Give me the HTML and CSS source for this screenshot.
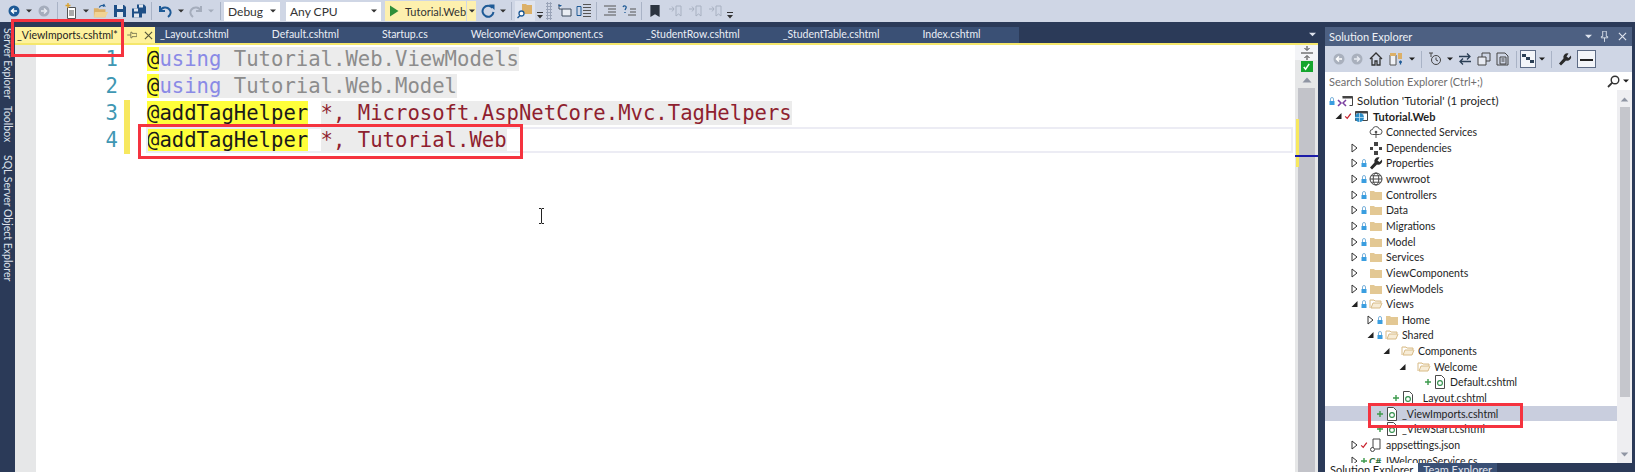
FILE: index.html
```html
<!DOCTYPE html>
<html lang="en">
<head>
<meta charset="utf-8">
<title>Visual Studio</title>
<link rel="stylesheet" href="styles.css">
</head>
<body>
<svg class="sprite" aria-hidden="true">
  <symbol id="folder" viewBox="0 0 14 12"><path d="M1 2h4l1 1h7v8H1z" fill="#e3c894"/></symbol>
  <symbol id="folder-open" viewBox="0 0 14 12"><path d="M1 2h4l1 1h6v2H4L2 10h9l2-5" fill="#f7ecd6" stroke="#d8bb86"/><path d="M1 2v8" stroke="#d8bb86"/></symbol>
  <symbol id="lock" viewBox="0 0 8 10"><path d="M2.500 5V3a1.500 1.500 0 0 1 3 0v2" fill="none" stroke="#7db4dc"/><rect x="1.500" y="5" width="5" height="4" fill="#3a9ee0"/></symbol>
  <symbol id="check" viewBox="0 0 10 10"><path d="M1.500 5.500 4 8l4.500-6" fill="none" stroke="#c8202c" stroke-width="1.600"/></symbol>
  <symbol id="plus" viewBox="0 0 8 8"><path d="M4 1v6M1 4h6" stroke="#3c9a4c" stroke-width="1.400"/></symbol>
  <symbol id="razor" viewBox="0 0 14 14"><path d="M2.500 .5h6l3 3v10h-9z" fill="#fff" stroke="#4a4a4a"/><circle cx="7" cy="8" r="2.400" fill="none" stroke="#2f8f4a" stroke-width="1.100"/></symbol>
  <symbol id="wrench" viewBox="0 0 14 14"><path d="M13 3.500 10.500 6 8.500 4.500 10.500 1.500A4 4 0 0 0 5.500 6.500L1 11.500 3 13.500 8 8.500A4 4 0 0 0 13 3.500z" fill="#2a2a2a"/></symbol>
  <symbol id="globe" viewBox="0 0 14 14"><g fill="none" stroke="#444"><circle cx="7" cy="7" r="6"/><ellipse cx="7" cy="7" rx="2.800" ry="6"/><path d="M1 7h12M2 3.800h10M2 10.200h10"/></g></symbol>
  <symbol id="cloud" viewBox="0 0 14 14"><path d="M3.500 9.500a2.500 2.500 0 0 1 0-5 3.500 3.500 0 0 1 6.800-.5 2.700 2.700 0 0 1 0 5.500z" fill="#fff" stroke="#555"/><path d="M7 6v7" stroke="#555"/><circle cx="7" cy="7" r="1.300" fill="#555"/></symbol>
  <symbol id="deps" viewBox="0 0 14 14"><g fill="#444"><rect x="5" y="1" width="4" height="4"/><rect x="1" y="6" width="3" height="3"/><rect x="10" y="6" width="3" height="3"/><rect x="5" y="10" width="4" height="4"/></g></symbol>
  <symbol id="solution" viewBox="0 0 16 14"><path d="M5.500 2.500h10v9h-3" fill="none" stroke="#444"/><path d="M5.500 3.500h10" stroke="#444" stroke-width="2"/><path d="M1 6l3 3-3 3M9 6 6 9l3 3" fill="none" stroke="#7a3fa0" stroke-width="1.500"/></symbol>
  <symbol id="webproj" viewBox="0 0 16 14"><path d="M2.500 2.500h12v9h-12z" fill="#fff" stroke="#444"/><path d="M2.500 3.500h12" stroke="#444" stroke-width="2"/><circle cx="6.500" cy="8.500" r="4.500" fill="#2c8dc8"/><path d="M2 8.500h9M6.500 4v9" stroke="#bfe0f2" stroke-width=".8"/></symbol>
  <symbol id="json" viewBox="0 0 14 14"><path d="M4 1h7v10" fill="none" stroke="#444"/><path d="M4 1v9" stroke="#444"/><circle cx="3.500" cy="11.500" r="2" fill="none" stroke="#444"/><path d="M11 11H6" stroke="#444"/></symbol>
  <symbol id="back" viewBox="0 0 12 12"><circle cx="6" cy="6" r="5.500" fill="currentColor"/><path d="M9 6H4M6 3.500 3.500 6 6 8.500" fill="none" stroke="#fff" stroke-width="1.500"/></symbol>
  <symbol id="fwd" viewBox="0 0 12 12"><circle cx="6" cy="6" r="5.500" fill="currentColor"/><path d="M3 6h5M6 3.500 8.500 6 6 8.500" fill="none" stroke="#e8ebf2" stroke-width="1.500"/></symbol>
  <symbol id="dd" viewBox="0 0 6 4"><path d="M0 .5h6L3 3.500z" fill="currentColor"/></symbol>
  <symbol id="over" viewBox="0 0 6 7"><path d="M0 0h6v1H0zM0 3h6L3 6.500z" fill="#333"/></symbol>
  <symbol id="newproj" viewBox="0 0 16 16"><path d="M4.500 4.500h8v11h-8z" fill="#fff" stroke="#555"/><path d="M6 8h5M6 10h5M6 12h5" stroke="#555"/><path d="M5 0v5M2.500 2.500h5" stroke="#d9a22f" stroke-width="1.400"/></symbol>
  <symbol id="open" viewBox="0 0 18 16"><path d="M1 5h5l1 1h7v9H1z" fill="#dcb067"/><path d="M2 9h15l-3 6H1z" fill="#f0d394"/><path d="M7 4c1-2 4-3 6-2l-1-2m1 2-2 1" fill="none" stroke="#1e5a96" stroke-width="1.300"/></symbol>
  <symbol id="save" viewBox="0 0 14 14"><path d="M1 1h10l2 2v10H1z" fill="#1e4f86"/><rect x="4" y="1" width="6" height="4" fill="#dfe5ee"/><rect x="4" y="8" width="6" height="5" fill="#dfe5ee"/></symbol>
  <symbol id="saveall" viewBox="0 0 16 15"><path d="M6 1h7l2 2v7H6z" fill="#1e4f86"/><rect x="8" y="1" width="4" height="3" fill="#dfe5ee"/><path d="M1 5h8l2 2v7H1z" fill="#1e4f86"/><rect x="3" y="5" width="4" height="3" fill="#dfe5ee"/><rect x="3" y="10" width="5" height="4" fill="#dfe5ee"/></symbol>
  <symbol id="undo" viewBox="0 0 14 14"><path d="M2 2v5h5M2.500 6.500C4 3 9 2.500 11.500 5.500c2 2.500 1 5.500-1.500 7.500" fill="none" stroke="currentColor" stroke-width="2"/></symbol>
  <symbol id="redo" viewBox="0 0 14 14"><path d="M12 2v5H7M11.500 6.500C10 3 5 2.500 2.500 5.500c-2 2.500-1 5.500 1.500 7.500" fill="none" stroke="currentColor" stroke-width="2"/></symbol>
  <symbol id="play" viewBox="0 0 10 12"><path d="M1 .5 9.500 6 1 11.500z" fill="#2f8f3a"/></symbol>
  <symbol id="refresh" viewBox="0 0 14 14"><path d="M11.500 4a5.500 5.500 0 1 0 1 4" fill="none" stroke="#1e5a96" stroke-width="2"/><path d="M8 .5h5.500V6z" fill="#1e5a96"/></symbol>
  <symbol id="find" viewBox="0 0 16 16"><path d="M5 1h4l1 1h5v9H5z" fill="#dcb067"/><circle cx="4.500" cy="10.500" r="2.500" fill="#fff" stroke="#1e5a96" stroke-width="1.300"/><path d="M3 12.500 .5 15" stroke="#1e5a96" stroke-width="1.500"/></symbol>
  <symbol id="tree1" viewBox="0 0 16 14"><path d="M2 0v5h12v7H5V5" fill="#e9edf3" stroke="#3d4a5c"/><path d="M1 1 3 3 5 1z" fill="#1e5a96"/></symbol>
  <symbol id="tree2" viewBox="0 0 16 15"><path d="M7 1h8M7 4h8M7 7h8M7 10h8M7 13h8" stroke="#555"/><path d="M1 3h4v9H1z" fill="none" stroke="#1e5a96"/></symbol>
  <symbol id="lines" viewBox="0 0 14 12"><path d="M1 1h12M5 4h8M5 7h8M1 10h12" stroke="#555"/></symbol>
  <symbol id="lines-q" viewBox="0 0 14 12"><path d="M8 4h6M8 7h6M6 10h8" stroke="#555"/><path d="M1 2c1-2 4-1 3 1L3 5M3 7v1" fill="none" stroke="#1e5a96" stroke-width="1.300"/></symbol>
  <symbol id="bookmark" viewBox="0 0 10 13"><path d="M0 0h10v13L5 10l-5 3z" fill="#2c3440"/></symbol>
  <symbol id="bm-arrow" viewBox="0 0 14 12"><path d="M1 4h5l-2-2.500M6 4 4 6.500M8 1h5v10l-2.500-2L8 11z" fill="none" stroke="#a8b1c1"/></symbol>
  <symbol id="home" viewBox="0 0 14 14"><path d="M1 7 7 1l6 6M3 6v7h3V9h2v4h3V6" fill="none" stroke="#333" stroke-width="1.300"/></symbol>
  <symbol id="sync" viewBox="0 0 14 14"><path d="M1 3h6v10H1z" fill="#f0f2f6" stroke="#555"/><path d="M1 1h6v3H1z" fill="#dcb067"/><path d="M9 1h4v6H9z" fill="#dcb067"/><path d="M10 10h3m-1.500-1.500v4" stroke="#1e5a96" stroke-width="1.300"/></symbol>
  <symbol id="clock" viewBox="0 0 14 14"><circle cx="8" cy="8" r="4.500" fill="none" stroke="#444"/><path d="M8 5.500V8l2 1M1 1h4M3 1v4" fill="none" stroke="#444"/></symbol>
  <symbol id="swap" viewBox="0 0 14 14"><path d="M1 4.500h11M9 1.500l3 3-3 3M13 9.500H2M5 6.500l-3 3 3 3" fill="none" stroke="#2b3f55" stroke-width="1.300"/></symbol>
  <symbol id="copy1" viewBox="0 0 14 14"><path d="M5 1h8v8H5z" fill="none" stroke="#444"/><path d="M1 5h8v8H1z" fill="#e8ebf2" stroke="#444"/></symbol>
  <symbol id="copy2" viewBox="0 0 14 14"><path d="M1 1h8l3 3v9H1z" fill="none" stroke="#444"/><path d="M4 5h6v7H4z" fill="none" stroke="#444"/><path d="M5.500 7h3M5.500 9h3" stroke="#444"/></symbol>
  <symbol id="schema" viewBox="0 0 14 12"><path d="M1 1h4v3H1zM5 4h4v3H5zM9 7h4v3H9z" fill="#2b3f55"/></symbol>
  <symbol id="pin" viewBox="0 0 10 12"><path d="M3 0h4v6h1.500v1.500h-7V6H3zM5 7.500V12" fill="none" stroke="currentColor"/></symbol>
  <symbol id="pinh" viewBox="0 0 12 10"><path d="M12 3v4H6V8.500H4.500v-7H6V3zM4.500 5H0" fill="none" stroke="#6a6a4a"/></symbol>
  <symbol id="close" viewBox="0 0 10 10"><path d="M1 1l8 8M9 1 1 9" stroke="currentColor" stroke-width="1.300"/></symbol>
  <symbol id="search" viewBox="0 0 13 13"><circle cx="8" cy="5" r="3.800" fill="none" stroke="#333" stroke-width="1.400"/><path d="M5.300 7.700 1 12" stroke="#333" stroke-width="1.800"/></symbol>
  <symbol id="split" viewBox="0 0 12 14"><path d="M0 7h12M6 0v3.500M6 14v-3.500M3.500 2 6 4.500 8.500 2M3.500 12 6 9.500 8.500 12" fill="none" stroke="#333"/></symbol>
  <symbol id="up" viewBox="0 0 10 6"><path d="M5 .5 9.500 5.500H.5z" fill="#8f95a3"/></symbol>
  <symbol id="down" viewBox="0 0 10 6"><path d="M5 5.500 9.500 .5H.5z" fill="#8f95a3"/></symbol>
  <symbol id="closed" viewBox="0 0 8 10"><path d="M1.500 1 6.500 5l-5 4z" fill="#fff" stroke="#333"/></symbol>
  <symbol id="opened" viewBox="0 0 8 8"><path d="M7 1v6H1z" fill="#222"/></symbol>
  <symbol id="ibeam" viewBox="0 0 7 16"><path d="M1 .5h2L3.500 1 4 .5h2M3.500 1v14M1 15.500h2l.5-.5.5.5h2" fill="none" stroke="#222"/></symbol>
</svg>

<header class="toolbar">
  <span class="grip"></span>
  <span class="tb w20 c-blue"><svg class="i12"><use href="#back"/></svg></span>
  <span class="tb w10"><svg class="d"><use href="#dd"/></svg></span>
  <span class="tb w20 c-grey"><svg class="i12"><use href="#fwd"/></svg></span>
  <span class="tsep"></span>
  <span class="tb w19"><svg class="i16"><use href="#newproj"/></svg></span>
  <span class="tb w12"><svg class="d"><use href="#dd"/></svg></span>
  <span class="tb w18"><svg class="i16"><use href="#open"/></svg></span>
  <span class="tb w20"><svg class="i14"><use href="#save"/></svg></span>
  <span class="tb w18"><svg class="i16"><use href="#saveall"/></svg></span>
  <span class="tsep"></span>
  <span class="tb w20 c-blue"><svg class="i14"><use href="#undo"/></svg></span>
  <span class="tb w12"><svg class="d"><use href="#dd"/></svg></span>
  <span class="tb w18 c-grey"><svg class="i14"><use href="#redo"/></svg></span>
  <span class="tb w12 c-grey"><svg class="d"><use href="#dd"/></svg></span>
  <span class="tsep"></span>
  <span class="combo debug">Debug<svg class="d"><use href="#dd"/></svg></span>
  <span class="combo cpu">Any CPU<svg class="d"><use href="#dd"/></svg></span>
  <span class="start"><svg class="play"><use href="#play"/></svg>Tutorial.Web</span>
  <span class="start-dd"><svg class="d"><use href="#dd"/></svg></span>
  <span class="tb w20"><svg class="i14"><use href="#refresh"/></svg></span>
  <span class="tb w10"><svg class="d"><use href="#dd"/></svg></span>
  <span class="tsep"></span>
  <span class="tb w20 find"><svg class="i16"><use href="#find"/></svg></span>
  <span class="tb w10"><svg class="ov"><use href="#over"/></svg></span>
  <span class="dots"></span>
  <span class="tb w20"><svg class="i16"><use href="#tree1"/></svg></span>
  <span class="tb w18"><svg class="i16"><use href="#tree2"/></svg></span>
  <span class="tsep"></span>
  <span class="tb w20"><svg class="i14"><use href="#lines"/></svg></span>
  <span class="tb w18"><svg class="i14"><use href="#lines-q"/></svg></span>
  <span class="tsep"></span>
  <span class="tb w20"><svg class="i12"><use href="#bookmark"/></svg></span>
  <span class="tb w20"><svg class="i14"><use href="#bm-arrow"/></svg></span>
  <span class="tb w20"><svg class="i14"><use href="#bm-arrow"/></svg></span>
  <span class="tb w20"><svg class="i14"><use href="#bm-arrow"/></svg></span>
  <span class="tb w10"><svg class="ov"><use href="#over"/></svg></span>
</header>

<div class="workspace">
  <nav class="rail">
    <span class="rail-item server">Server Explorer</span>
    <span class="rail-item toolbox">Toolbox</span>
    <span class="rail-item">SQL Server Object Explorer</span>
  </nav>

  <main class="docwell">
    <div class="tabstrip">
      <div class="tab active">
        <span class="tab-name">_ViewImports.cshtml*</span>
        <svg class="tab-pin"><use href="#pinh"/></svg>
        <svg class="tab-close"><use href="#close"/></svg>
      </div>
      <div class="tabgroup">
        <span class="tab">_Layout.cshtml</span>
        <span class="tab">Default.cshtml</span>
        <span class="tab">Startup.cs</span>
        <span class="tab">WelcomeViewComponent.cs</span>
        <span class="tab">_StudentRow.cshtml</span>
        <span class="tab">_StudentTable.cshtml</span>
        <span class="tab last">Index.cshtml</span>
      </div>
      <svg class="tabs-menu"><use href="#dd"/></svg>
    </div>
    <div class="tabline"></div>
    <div class="editor-wrap">
      <div class="margin"></div>
      <div class="editor">
        <div class="line">
          <span class="num">1</span><span class="chg"></span>
          <code class="code"><span class="yel">@</span><span class="shade"><span class="kw">using</span> <span class="ns">Tutorial.Web.ViewModels</span></span></code>
        </div>
        <div class="line">
          <span class="num">2</span><span class="chg"></span>
          <code class="code"><span class="yel">@</span><span class="shade"><span class="kw">using</span> <span class="ns">Tutorial.Web.Model</span></span></code>
        </div>
        <div class="line">
          <span class="num">3</span><span class="chg on"></span>
          <code class="code"><span class="yel">@addTagHelper</span> <span class="shade red">*, Microsoft.AspNetCore.Mvc.TagHelpers</span></code>
        </div>
        <div class="line current">
          <span class="num">4</span><span class="chg on"></span>
          <code class="code"><span class="yel">@addTagHelper</span> <span class="shade red">*, Tutorial.Web</span></code>
        </div>
        <svg class="ibeam"><use href="#ibeam"/></svg>
      </div>
      <aside class="vscroll">
        <div class="split"><svg class="split-i"><use href="#split"/></svg></div>
        <div class="status"><svg class="status-i" viewBox="0 0 10 10"><path d="M2 5.500 4 8l4-6" fill="none" stroke="#fff" stroke-width="1.600"/></svg></div>
        <svg class="vs-up"><use href="#up"/></svg>
        <div class="vs-track">
          <span class="mark"></span>
          <span class="caret"></span>
        </div>
      </aside>
    </div>
  </main>

  <section class="panel">
    <div class="p-title">
      <span class="p-name">Solution Explorer</span>
      <svg class="p-dd"><use href="#dd"/></svg>
      <svg class="p-pin"><use href="#pin"/></svg>
      <svg class="p-x"><use href="#close"/></svg>
    </div>
    <div class="p-tools">
      <span class="tb w18 c-grey2"><svg class="i12"><use href="#back"/></svg></span>
      <span class="tb w18 c-grey2"><svg class="i12"><use href="#fwd"/></svg></span>
      <span class="tb w20"><svg class="i14"><use href="#home"/></svg></span>
      <span class="tb w20"><svg class="i14"><use href="#sync"/></svg></span>
      <span class="tb w12"><svg class="d"><use href="#dd"/></svg></span>
      <span class="psep"></span>
      <span class="tb w20"><svg class="i14"><use href="#clock"/></svg></span>
      <span class="tb w10"><svg class="d"><use href="#dd"/></svg></span>
      <span class="tb w20"><svg class="i14"><use href="#swap"/></svg></span>
      <span class="tb w18"><svg class="i14"><use href="#copy1"/></svg></span>
      <span class="tb w20"><svg class="i14"><use href="#copy2"/></svg></span>
      <span class="psep"></span>
      <span class="toggle"><svg class="i14"><use href="#schema"/></svg></span>
      <span class="tb w12"><svg class="d"><use href="#dd"/></svg></span>
      <span class="psep"></span>
      <span class="tb w20"><svg class="i14"><use href="#wrench"/></svg></span>
      <span class="toggle wide"><span class="minus"></span></span>
    </div>
    <div class="p-search">
      <span class="p-search-text">Search Solution Explorer (Ctrl+;)</span>
      <svg class="i13"><use href="#search"/></svg>
      <svg class="d"><use href="#dd"/></svg>
    </div>
    <div class="p-body">
      <ul class="tree">
        <li class="row l0"><svg class="st"><use href="#lock"/></svg><svg class="ic wide-ic"><use href="#solution"/></svg><span class="label">Solution 'Tutorial' (1 project)</span></li>
        <li class="row l1"><svg class="ar op"><use href="#opened"/></svg><svg class="st"><use href="#check"/></svg><svg class="ic wide-ic"><use href="#webproj"/></svg><span class="label b">Tutorial.Web</span></li>
        <li class="row l2"><span class="ar"></span><span class="st"></span><svg class="ic"><use href="#cloud"/></svg><span class="label">Connected Services</span></li>
        <li class="row l2"><svg class="ar"><use href="#closed"/></svg><span class="st"></span><svg class="ic"><use href="#deps"/></svg><span class="label">Dependencies</span></li>
        <li class="row l2"><svg class="ar"><use href="#closed"/></svg><svg class="st"><use href="#lock"/></svg><svg class="ic"><use href="#wrench"/></svg><span class="label">Properties</span></li>
        <li class="row l2"><svg class="ar"><use href="#closed"/></svg><svg class="st"><use href="#lock"/></svg><svg class="ic"><use href="#globe"/></svg><span class="label">wwwroot</span></li>
        <li class="row l2"><svg class="ar"><use href="#closed"/></svg><svg class="st"><use href="#lock"/></svg><svg class="ic"><use href="#folder"/></svg><span class="label">Controllers</span></li>
        <li class="row l2"><svg class="ar"><use href="#closed"/></svg><svg class="st"><use href="#lock"/></svg><svg class="ic"><use href="#folder"/></svg><span class="label">Data</span></li>
        <li class="row l2"><svg class="ar"><use href="#closed"/></svg><svg class="st"><use href="#lock"/></svg><svg class="ic"><use href="#folder"/></svg><span class="label">Migrations</span></li>
        <li class="row l2"><svg class="ar"><use href="#closed"/></svg><svg class="st"><use href="#lock"/></svg><svg class="ic"><use href="#folder"/></svg><span class="label">Model</span></li>
        <li class="row l2"><svg class="ar"><use href="#closed"/></svg><svg class="st"><use href="#lock"/></svg><svg class="ic"><use href="#folder"/></svg><span class="label">Services</span></li>
        <li class="row l2"><svg class="ar"><use href="#closed"/></svg><span class="st"></span><svg class="ic"><use href="#folder"/></svg><span class="label">ViewComponents</span></li>
        <li class="row l2"><svg class="ar"><use href="#closed"/></svg><svg class="st"><use href="#lock"/></svg><svg class="ic"><use href="#folder"/></svg><span class="label">ViewModels</span></li>
        <li class="row l2"><svg class="ar op"><use href="#opened"/></svg><svg class="st"><use href="#lock"/></svg><svg class="ic"><use href="#folder-open"/></svg><span class="label">Views</span></li>
        <li class="row l3"><svg class="ar"><use href="#closed"/></svg><svg class="st"><use href="#lock"/></svg><svg class="ic"><use href="#folder"/></svg><span class="label">Home</span></li>
        <li class="row l3"><svg class="ar op"><use href="#opened"/></svg><svg class="st"><use href="#lock"/></svg><svg class="ic"><use href="#folder-open"/></svg><span class="label">Shared</span></li>
        <li class="row l4"><svg class="ar op"><use href="#opened"/></svg><span class="st"></span><svg class="ic"><use href="#folder-open"/></svg><span class="label">Components</span></li>
        <li class="row l5"><svg class="ar op"><use href="#opened"/></svg><span class="st"></span><svg class="ic"><use href="#folder-open"/></svg><span class="label">Welcome</span></li>
        <li class="row l6"><span class="ar"></span><svg class="st"><use href="#plus"/></svg><svg class="ic"><use href="#razor"/></svg><span class="label">Default.cshtml</span></li>
        <li class="row l4"><span class="ar"></span><svg class="st"><use href="#plus"/></svg><svg class="ic"><use href="#razor"/></svg><span class="label">_Layout.cshtml</span></li>
        <li class="row l3 sel"><span class="ar"></span><svg class="st"><use href="#plus"/></svg><svg class="ic"><use href="#razor"/></svg><span class="label">_ViewImports.cshtml</span></li>
        <li class="row l3"><span class="ar"></span><svg class="st"><use href="#plus"/></svg><svg class="ic"><use href="#razor"/></svg><span class="label">_ViewStart.cshtml</span></li>
        <li class="row l2"><svg class="ar"><use href="#closed"/></svg><svg class="st"><use href="#check"/></svg><svg class="ic"><use href="#json"/></svg><span class="label">appsettings.json</span></li>
        <li class="row l2"><svg class="ar"><use href="#closed"/></svg><svg class="st"><use href="#plus"/></svg><span class="ic cs">C#</span><span class="label">IWelcomeService.cs</span></li>
      </ul>
      <aside class="tree-scroll">
        <svg class="ts-arrow"><use href="#up"/></svg>
        <span class="ts-thumb"></span>
        <svg class="ts-arrow"><use href="#down"/></svg>
      </aside>
    </div>
    <div class="p-tabs">
      <span class="p-tab on">Solution Explorer</span>
      <span class="p-tab">Team Explorer</span>
    </div>
  </section>
</div>

<div class="callout c-tab"></div>
<div class="callout c-line"></div>
<div class="callout c-tree"></div>
</body>
</html>
```
FILE: styles.css
```css
* { box-sizing: border-box; }
html, body { margin: 0; height: 100%; }
body {
  position: relative;
  width: 1635px;
  height: 472px;
  overflow: hidden;
  display: flex;
  flex-direction: column;
  background: #2b3a58;
  font-family: Lato, "Open Sans", sans-serif;
  font-size: 11px;
  color: #1e1e1e;
}
.sprite { display: none; }
svg { display: block; flex: none; }

/* top toolbar */
.toolbar {
  height: 22px;
  flex: none;
  display: flex;
  align-items: center;
  background: #cfd6e5;
  color: #333;
}
.grip { width: 4px; }
.tb { display: flex; align-items: center; justify-content: center; flex: none; height: 20px; }
.w10 { width: 10px; }
.w12 { width: 12px; }
.w18 { width: 18px; }
.w19 { width: 19px; }
.w20 { width: 20px; }
.c-blue { color: #1e5a96; }
.c-grey { color: #a5adbc; }
.c-grey2 { color: #a9b0bd; }
.i12 { width: 12px; height: 12px; }
.i13 { width: 13px; height: 13px; }
.i14 { width: 14px; height: 14px; }
.i16 { width: 16px; height: 16px; }
.d { width: 6px; height: 4px; }
.ov { width: 6px; height: 7px; margin-top: 8px; }
.tsep { width: 1px; height: 18px; margin: 0 3px; background: #a9b3c6; flex: none; }
.combo {
  height: 19px;
  background: #fff;
  display: flex;
  align-items: center;
  justify-content: space-between;
  padding: 0 4px 0 4px;
  font-size: 12px;
  flex: none;
}
.debug { width: 56px; }
.cpu { width: 95px; margin-left: 6px; }
.start {
  height: 20px;
  width: 81px;
  margin-left: 4px;
  display: flex;
  align-items: center;
  gap: 6px;
  padding-left: 4px;
  background: #fdf0ae;
  font-size: 11px;
  flex: none;
}
.play { width: 10px; height: 12px; }
.start-dd {
  width: 9px;
  height: 20px;
  margin-left: 1px;
  margin-right: 2px;
  background: #fdf0ae;
  display: flex;
  align-items: center;
  justify-content: center;
  flex: none;
}
.find { background: #dfe4ef; }
.dots {
  width: 6px;
  height: 18px;
  margin: 0 3px 0 1px;
  background: radial-gradient(circle, #9aa4b8 1px, transparent 1.2px) 0 0 / 3px 3px;
  flex: none;
}

/* workspace */
.workspace { flex: 1; min-height: 0; display: flex; }
.rail {
  width: 15px;
  flex: none;
  padding-top: 6px;
  display: flex;
  flex-direction: column;
  align-items: center;
}
.rail-item {
  writing-mode: vertical-rl;
  color: #dde2ec;
  font-size: 10.5px;
  line-height: 15px;
  white-space: nowrap;
}
.server { margin-bottom: 7px; }
.toolbox { margin-bottom: 13px; }

.docwell {
  width: 1303px;
  flex: none;
  display: flex;
  flex-direction: column;
  min-height: 0;
}
.tabstrip { height: 21px; flex: none; display: flex; align-items: flex-end; position: relative; }
.tab { display: block; color: #eaeef5; padding: 0 43px 0 0; height: 16px; line-height: 14px; font-size: 10.5px; white-space: nowrap; }
.tab.active {
  width: 140px;
  height: 16px;
  display: flex;
  align-items: center;
  padding: 0 0 0 2px;
  background: #fef29d;
  color: #1e1e1e;
}
.tab-name { width: 105px; }
.tab-pin { width: 10px; height: 8px; margin-left: 5px; }
.tab-close { width: 9px; height: 9px; margin-left: 7px; color: #55553a; }
.tabgroup { display: flex; background: #3a5075; padding-left: 5px; height: 16px; }
.tab.last { padding-right: 38px; }
.tabs-menu { width: 7px; height: 5px; color: #dde2ec; margin: 0 2px 6px auto; }
.tabline { height: 2px; flex: none; background: #f5e76c; }

.editor-wrap { flex: 1; min-height: 0; display: flex; }
.margin { width: 21px; flex: none; background: #e6e7e8; }
.editor { flex: 1; background: #fff; position: relative; min-width: 0; }
.line { height: 27.25px; display: flex; align-items: center; }
.num {
  width: 82px;
  text-align: right;
  color: #3f97b3;
  font: 20.6px "DejaVu Sans Mono", monospace;
  flex: none;
}
.chg { width: 6px; height: 100%; margin-left: 6px; flex: none; }
.chg.on { background: #f7e85f; }
.code {
  margin-left: 17px;
  font: 20.6px/24px "DejaVu Sans Mono", monospace;
  white-space: pre;
  color: #1a1a1a;
}
.yel { background: #ffff3a; }
.shade { background: #ececec; }
.kw { color: #8a8ae6; }
.ns { color: #8c8c8c; }
.red { color: #8f1f2f; }
.line.current { position: relative; }
.line.current::after {
  content: "";
  position: absolute;
  left: 110px;
  right: 2px;
  top: 0;
  bottom: 1px;
  border: 2px solid #ececf4;
  pointer-events: none;
}
.ibeam { position: absolute; left: 502px; top: 163px; width: 7px; height: 16px; }

.vscroll { width: 23px; flex: none; background: #e6e7e8; display: flex; flex-direction: column; align-items: center; }
.split { width: 23px; height: 15px; background: #f3f4f7; display: flex; align-items: center; justify-content: center; flex: none; }
.split-i { width: 12px; height: 14px; }
.status { width: 12px; height: 11px; margin-top: 1px; background: #15a52d; flex: none; display: flex; align-items: center; justify-content: center; }
.status-i { width: 9px; height: 9px; }
.vs-up { width: 10px; height: 6px; margin: 5px 0; }
.vs-track { flex: 1; width: 100%; background: linear-gradient(to right, #e6e7e8 3px, #c2c3c9 3px, #c2c3c9 20px, #e6e7e8 20px); position: relative; }
.mark { position: absolute; left: 1px; top: 31px; width: 3px; height: 48px; background: #f7e85f; }
.caret { position: absolute; left: 0; right: 0; top: 67px; height: 2px; background: #1c1ca8; }

/* solution explorer */
.panel {
  width: 307px;
  margin-left: 7px;
  margin-top: 5px;
  flex: none;
  display: flex;
  flex-direction: column;
  min-height: 0;
}
.p-title { height: 19px; flex: none; background: #4d6082; color: #eef1f6; display: flex; align-items: center; padding-left: 4px; }
.p-name { flex: 1; font-size: 11px; }
.p-dd { width: 7px; height: 5px; color: #dfe4ee; }
.p-pin { width: 9px; height: 11px; margin-left: 8px; color: #dfe4ee; }
.p-x { width: 9px; height: 9px; margin: 0 5px 0 9px; color: #dfe4ee; }
.p-tools { height: 26px; flex: none; background: #cfd6e5; display: flex; align-items: center; padding-left: 5px; }
.psep { width: 1px; height: 17px; background: #a9b3c6; margin: 0 3px; flex: none; }
.toggle { width: 16px; height: 18px; background: #f3f5f9; border: 1px solid #5d6b85; display: flex; align-items: center; justify-content: center; flex: none; }
.toggle.wide { width: 19px; margin-left: 2px; }
.minus { width: 13px; height: 2px; background: #222; margin-top: 1px; }
.p-search { height: 18px; flex: none; background: #fff; display: flex; align-items: center; padding: 0 3px 0 4px; gap: 3px; }
.p-search-text { flex: 1; color: #6d6d6d; font-size: 11px; }
.p-body { flex: 1; min-height: 0; display: flex; background: #fff; overflow: hidden; }
.tree { flex: 1; list-style: none; margin: 0; padding: 3px 0 0; min-width: 0; }
.row { height: 15.65px; display: flex; align-items: center; white-space: nowrap; }
.row.sel { background: #c9cede; }
.l0 { padding-left: 2px; }
.l1 { padding-left: 9px; }
.l2 { padding-left: 25px; }
.l3 { padding-left: 41px; }
.l4 { padding-left: 57px; }
.l5 { padding-left: 73px; }
.l6 { padding-left: 89px; }
.ar { width: 9px; height: 10px; flex: none; }
.ar.op { height: 8px; }
.st { width: 8px; height: 10px; margin: 0 1px; flex: none; }
.ic { width: 14px; height: 14px; flex: none; }
.wide-ic { width: 16px; margin-right: 1px; }
.cs { color: #2f6f3a; font-size: 10px; font-weight: 700; line-height: 14px; }
.label { margin-left: 3px; font-size: 10.5px; color: #1e1e1e; }
.l0 .label { font-size: 11.5px; }
.label.b { font-size: 11px; font-weight: 700; }
.tree-scroll { width: 15px; flex: none; background: #eeeef1; display: flex; flex-direction: column; align-items: center; padding: 7px 0 6px; }
.ts-arrow { width: 9px; height: 5px; flex: none; }
.ts-thumb { width: 10px; height: 290px; margin: 5px 0 auto; background: #c5c6cc; }
.p-tabs { height: 9px; flex: none; display: flex; background: #2b3a58; overflow: hidden; }
.p-tab { height: 18px; line-height: 13px; padding: 0 5px; color: #e3e7f0; background: #3a5075; font-size: 11px; }
.p-tab.on { background: #fff; color: #1e1e1e; }

/* red annotations */
.callout { position: absolute; border: 3px solid #f5333f; pointer-events: none; }
.c-tab { left: 11px; top: 19px; width: 113px; height: 38px; }
.c-line { left: 138px; top: 124px; width: 385px; height: 35px; }
.c-tree { left: 1368px; top: 403px; width: 155px; height: 25px; }
```
